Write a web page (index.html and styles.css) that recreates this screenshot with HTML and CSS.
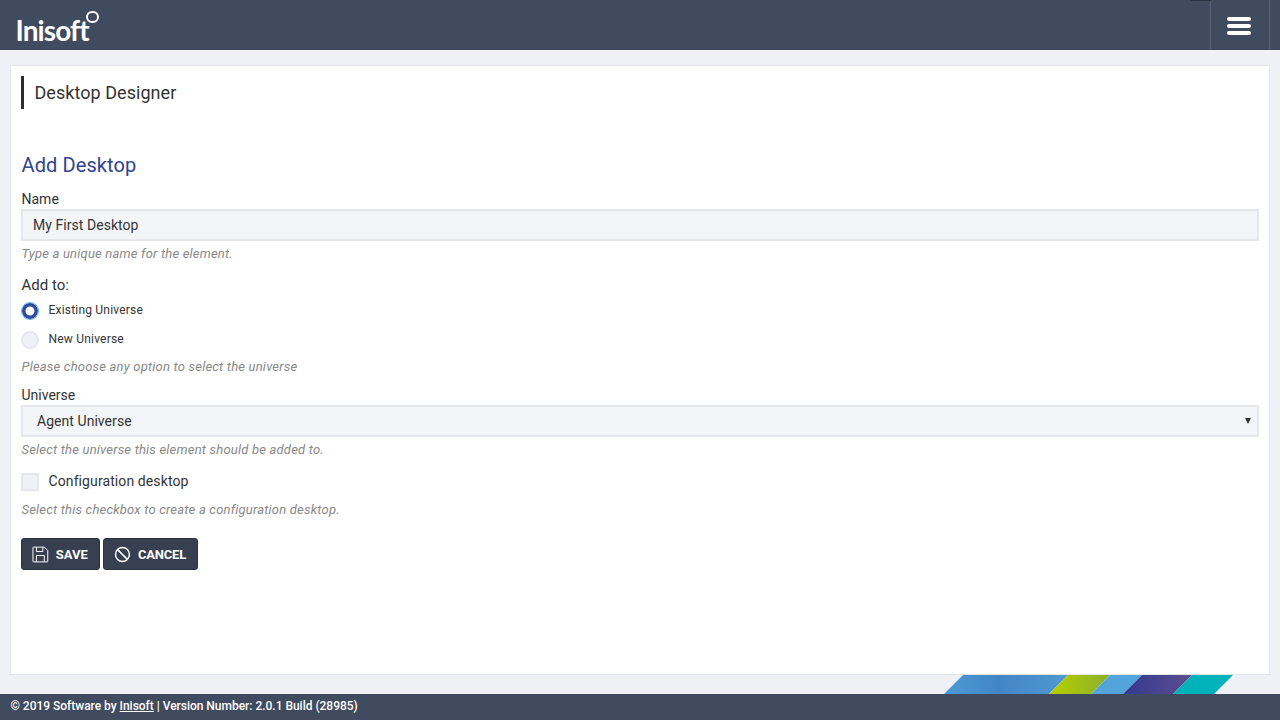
FILE: index.html
```html
<!DOCTYPE html>
<html lang="en">
<head>
<meta charset="utf-8">
<title>Desktop Designer</title>
<link rel="stylesheet" href="styles.css">
</head>
<body>
<header class="topbar">
  <a class="logo"><span class="logo-text">Inisoft</span><span class="logo-ring"></span></a>
  <span class="top-strip"></span>
  <button class="menu-btn" aria-label="Menu"><span></span><span></span><span></span></button>
</header>
<main class="panel">
  <h1 class="page-title">Desktop Designer</h1>
  <h2 class="section-title">Add Desktop</h2>
  <form class="form">
    <label class="label name">Name</label>
    <div class="input">My First Desktop</div>
    <p class="help">Type a unique name for the element.</p>
    <div class="label add-to">Add to:</div>
    <div class="radio-row first"><span class="radio checked"></span><span class="radio-label">Existing Universe</span></div>
    <div class="radio-row"><span class="radio"></span><span class="radio-label">New Universe</span></div>
    <p class="help help-radio">Please choose any option to select the universe</p>
    <label class="label universe">Universe</label>
    <div class="input select">Agent Universe<span class="caret"></span></div>
    <p class="help help-select">Select the universe this element should be added to.</p>
    <div class="check-row"><span class="checkbox"></span><span class="check-label">Configuration desktop</span></div>
    <p class="help help-check">Select this checkbox to create a configuration desktop.</p>
    <div class="actions">
      <button type="button" class="btn btn-save">
        <svg width="17" height="17" viewBox="0 0 17 17" fill="none" stroke="#fff" stroke-width="1"><path d="M1 1.5C1 1.2 1.2 1 1.5 1H12.5L16 4.5V15.5C16 15.8 15.8 16 15.5 16H1.5C1.2 16 1 15.8 1 15.5Z" stroke-linejoin="round"/><path d="M4.5 1.2V5.5H11V1.2"/><path d="M4.5 15.8V9.5H12.5V15.8"/></svg>
        SAVE</button>
      <button type="button" class="btn btn-cancel">
        <svg width="17" height="17" viewBox="0 0 17 17" fill="none" stroke="#fff" stroke-width="1.5"><circle cx="8.5" cy="8.5" r="7"/><path d="M3.6 3.6L13.4 13.4"/></svg>
        CANCEL</button>
    </div>
  </form>
</main>
<div class="ribbon-row">
  <svg class="ribbon" width="289" height="19" viewBox="0 0 289 19">
    <defs>
      <linearGradient id="rb" x1="0" x2="1" y1="0" y2="0"><stop offset="0" stop-color="#4c9ad5"/><stop offset=".45" stop-color="#4285c6"/><stop offset=".55" stop-color="#4789c9"/><stop offset="1" stop-color="#4d9ad2"/></linearGradient>
      <linearGradient id="rg" x1="0" x2="1" y1="0" y2="0"><stop offset="0" stop-color="#b7cf00"/><stop offset="1" stop-color="#8cb02c"/></linearGradient>
      <linearGradient id="rp" x1="0" x2="1" y1="0" y2="0"><stop offset="0" stop-color="#34388f"/><stop offset="1" stop-color="#5d4f90"/></linearGradient>
    </defs>
    <polygon points="19,0 124,0 105,19 0,19" fill="url(#rb)"/>
    <polygon points="124,0 166,0 147,19 105,19" fill="url(#rg)"/>
    <polygon points="166,0 198,0 179,19 147,19" fill="#54a4dc"/>
    <polygon points="198,0 248,0 229,19 179,19" fill="url(#rp)"/>
    <polygon points="248,0 289,0 270,19 229,19" fill="#00b2b9"/>
  </svg>
</div>
<footer class="footer">© 2019 Software by <u>Inisoft</u> | Version Number: 2.0.1 Build (28985)</footer>
</body>
</html>
```
FILE: styles.css
```css
* { box-sizing: border-box; }
html, body { margin: 0; height: 100%; }
body {
  display: flex;
  flex-direction: column;
  height: 720px;
  overflow: hidden;
  background: #f0f1f6;
  font-family: Roboto, "Liberation Sans", sans-serif;
  color: #333;
}
.topbar {
  position: relative;
  flex: none;
  height: 50px;
  display: flex;
  justify-content: space-between;
  background: #414b5f;
}
.logo { position: relative; display: block; margin-left: 15.5px; width: 90px; }
.logo-text {
  position: absolute;
  left: 0;
  top: 13px;
  font: 700 28px/34px Lato, sans-serif;
  letter-spacing: -.9px;
  color: #fff;
}
.logo-ring {
  position: absolute;
  left: 70.5px;
  top: 10.5px;
  width: 12.5px;
  height: 12.5px;
  border: 2.5px solid #fff;
  border-radius: 50%;
}
.top-strip { position: absolute; left: 1191px; top: 0; width: 20px; height: 1px; background: #2b3240; }
.menu-btn {
  width: 60px;
  height: 49px;
  margin-right: 10px;
  padding: 17px 2px 0 0;
  display: flex;
  flex-direction: column;
  align-items: center;
  justify-content: flex-start;
  gap: 3px;
  background: none;
  border: 0;
  border-left: 1px solid #5a6375;
  border-right: 1px solid #5a6375;
}
.menu-btn span { display: block; flex: none; width: 24px; height: 4px; border-radius: 2px; background: #fff; }
.panel {
  flex: none;
  height: 610px;
  margin: 15px 10px 0;
  padding: 10px;
  background: #fff;
  border: 1px solid #e4e5ea;
}
.page-title {
  margin: 0;
  height: 33px;
  padding-left: 10.5px;
  border-left: 3px solid #2e2e2e;
  font-size: 18px;
  font-weight: 400;
  line-height: 33px;
  letter-spacing: .05px;
  color: #333;
}
.section-title {
  margin: 44px 0 0;
  padding-left: .5px;
  font-size: 20px;
  font-weight: 400;
  line-height: 24px;
  letter-spacing: .1px;
  color: #2f4490;
}
.form { display: block; }
.label { display: block; padding-left: .5px; font-size: 14px; line-height: 18px; color: #333; }
.name { margin-top: 13px; }
.input {
  height: 32px;
  margin-top: 1px;
  padding-left: 10px;
  background: #f4f5f9;
  border: 2px solid #e6e7ec;
  font-size: 14px;
  line-height: 28px;
  letter-spacing: .05px;
  color: #333;
}
.help { margin: 5px 0 0; padding-left: .5px; font-size: 13px; font-style: italic; line-height: 16px; letter-spacing: .2px; color: #888; }
.add-to { margin-top: 13px; font-size: 15px; line-height: 20px; }
.radio-row { display: flex; align-items: center; height: 18px; margin-top: 11px; }
.radio-row.first { margin-top: 6px; }
.radio {
  flex: none;
  width: 18px;
  height: 18px;
  margin-top: 2px;
  border-radius: 50%;
  background: #f0f1f6;
  border: 2px solid #e6e7ec;
}
.radio.checked {
  background: #fff;
  border: 1.5px solid #62b5e8;
  box-shadow: inset 0 0 0 3.5px #2f4a9c;
}
.radio-label { margin-left: 9.5px; font-size: 12px; letter-spacing: .2px; color: #333; }
.help-radio { margin-top: 11px; }
.universe { margin-top: 11px; }
.select { position: relative; padding-left: 14px; }
.caret {
  position: absolute;
  right: 6px;
  top: 11px;
  border-left: 3px solid transparent;
  border-right: 3px solid transparent;
  border-top: 6px solid #333;
}
.help-select { margin-top: 5px; }
.check-row { display: flex; align-items: center; height: 18px; margin-top: 14px; }
.checkbox { flex: none; width: 18px; height: 18px; margin-top: 2px; background: #f0f1f6; border: 2px solid #e6e7ec; }
.check-label { margin-left: 9.5px; font-size: 14px; letter-spacing: .1px; color: #333; }
.help-check { margin-top: 12px; }
.actions { display: flex; gap: 3px; margin-top: 20px; }
.btn {
  display: flex;
  align-items: center;
  gap: 7px;
  height: 32px;
  padding: 0 11px 0 10px;
  background: #373f50;
  border: 1px solid #2c3342;
  border-radius: 3px;
  font: 700 13px Roboto, sans-serif;
  color: #fff;
}
.btn-save { width: 79px; letter-spacing: .05px; }
.btn-cancel { width: 95px; letter-spacing: -.2px; }
.ribbon-row { flex: 1; display: flex; justify-content: flex-end; padding-right: 47px; }
.ribbon { display: block; }
.footer {
  flex: none;
  height: 26px;
  padding-left: 10.5px;
  background: #414b5f;
  font-size: 12px;
  font-weight: 500;
  line-height: 25px;
  letter-spacing: -.02px;
  color: #fff;
}
.footer u { text-decoration: underline; }
```
